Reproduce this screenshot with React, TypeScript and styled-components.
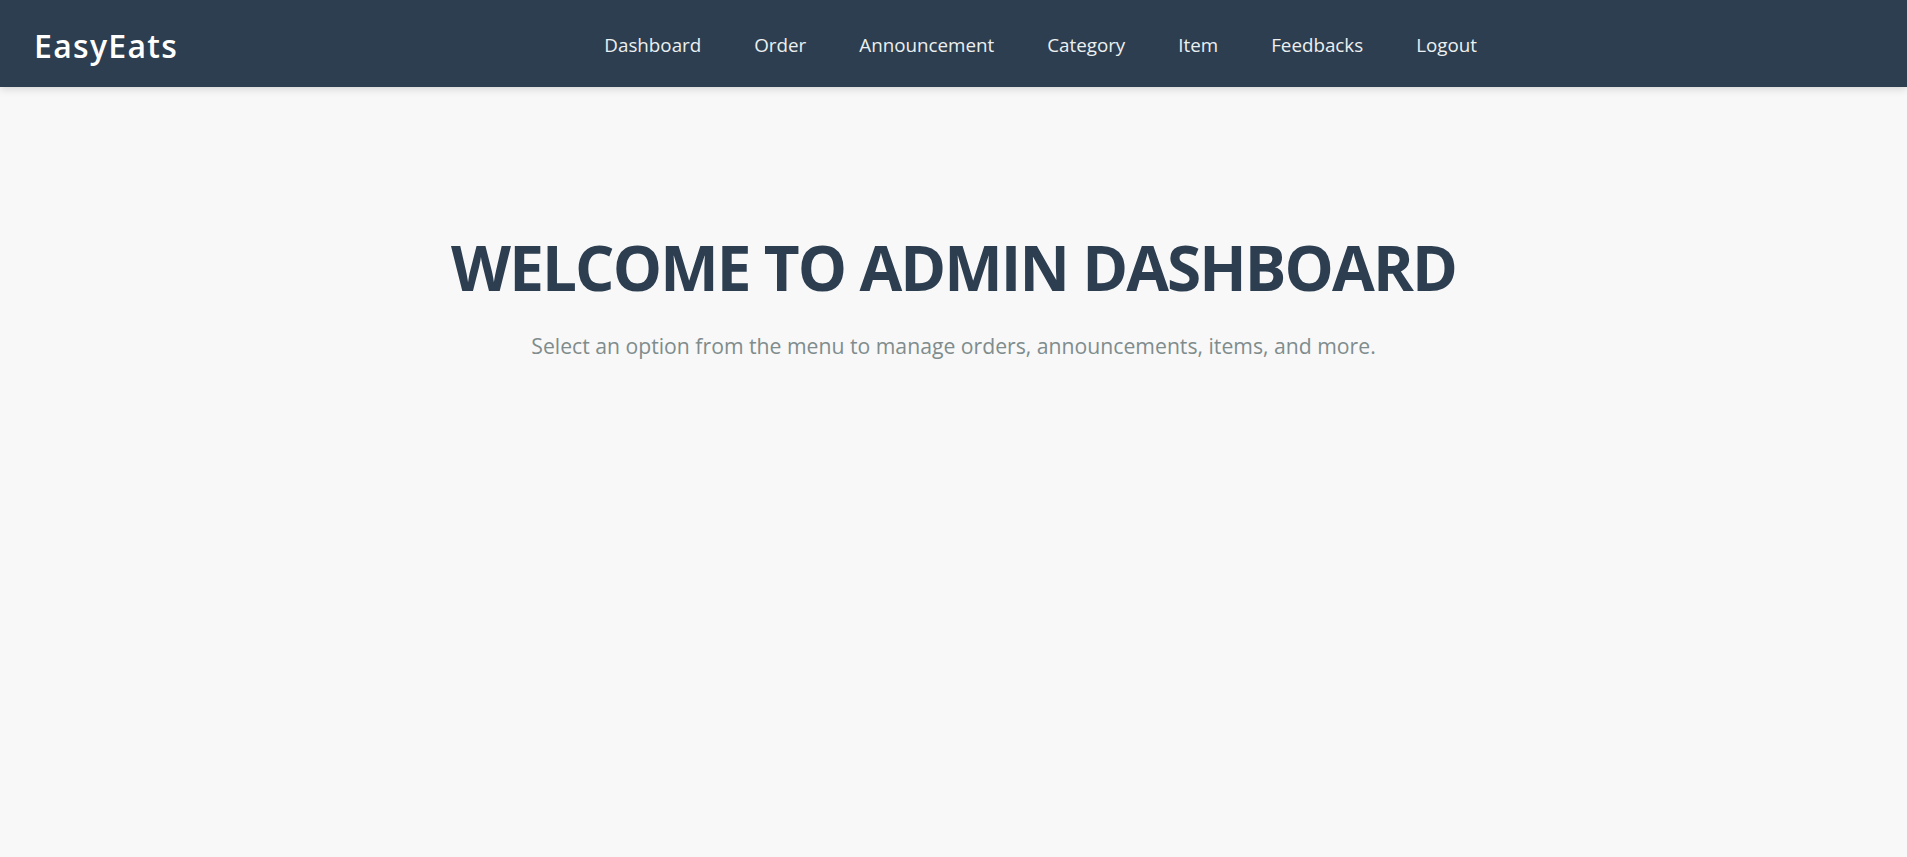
import React from "react";
import styled, { createGlobalStyle } from "styled-components";

const GlobalStyle = createGlobalStyle`
  html, body {
    margin: 0;
    padding: 0;
    background: #f8f8f8;
    font-family: "Open Sans", "Noto Sans", sans-serif;
  }
`;

const Navbar = styled.header`
  display: flex;
  align-items: center;
  height: 87px;
  padding: 3px 34px 0;
  background: #2c3e50;
  box-shadow: 0 2px 8px rgba(0, 0, 0, 0.15);
  box-sizing: border-box;
`;

const Logo = styled.div`
  color: #ffffff;
  font-size: 32px;
  font-weight: 600;
  letter-spacing: 1.3px;
`;

const Nav = styled.nav`
  margin: 0 396px 0 auto;
`;

const NavList = styled.ul`
  display: flex;
  gap: 53px;
  list-style-type: none;
  margin: 0;
  padding: 0;
`;

const NavLink = styled.a`
  color: #ecf0f1;
  font-size: 18.8px;
  text-decoration: none;
  cursor: pointer;
`;

const Main = styled.main`
  display: flex;
  flex-direction: column;
  align-items: center;
  padding-top: 142px;
  text-align: center;
`;

const Title = styled.h1`
  margin: 0;
  color: #2c3e50;
  font-size: 62px;
  line-height: 76px;
  font-weight: 700;
  letter-spacing: -1.9px;
`;

const Subtitle = styled.p`
  margin: 26px 0 0;
  color: #7f8c8d;
  font-size: 21.2px;
`;

const links = [
  "Dashboard",
  "Order",
  "Announcement",
  "Category",
  "Item",
  "Feedbacks",
  "Logout",
];

export default function App() {
  return (
    <>
      <GlobalStyle />
      <Navbar>
        <Logo>EasyEats</Logo>
        <Nav>
          <NavList>
            {links.map((link) => (
              <li key={link}>
                <NavLink>{link}</NavLink>
              </li>
            ))}
          </NavList>
        </Nav>
      </Navbar>
      <Main>
        <Title>WELCOME TO ADMIN DASHBOARD</Title>
        <Subtitle>
          Select an option from the menu to manage orders, announcements, items, and more.
        </Subtitle>
      </Main>
    </>
  );
}
